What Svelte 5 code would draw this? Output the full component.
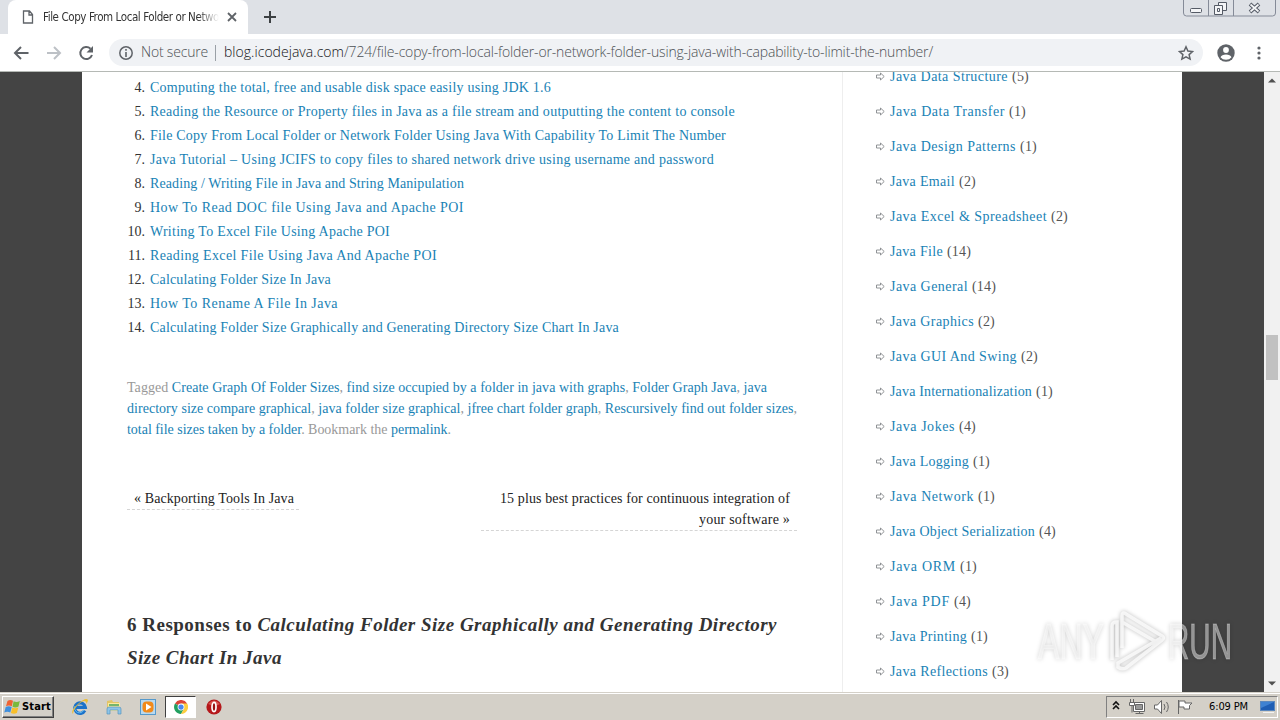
<script>
  const posts = [
    ['Computing the total, free and usable disk space easily using JDK 1.6', 401],
    ['Reading the Resource or Property files in Java as a file stream and outputting the content to console', 585],
    ['File Copy From Local Folder or Network Folder Using Java With Capability To Limit The Number', 576],
    ['Java Tutorial – Using JCIFS to copy files to shared network drive using username and password', 564],
    ['Reading / Writing File in Java and String Manipulation', 314],
    ['How To Read DOC file Using Java and Apache POI', 314],
    ['Writing To Excel File Using Apache POI', 240],
    ['Reading Excel File Using Java And Apache POI', 287],
    ['Calculating Folder Size In Java', 181],
    ['How To Rename A File In Java', 188],
    ['Calculating Folder Size Graphically and Generating Directory Size Chart In Java', 469]
  ];

  const categories = [
    ['Java Data Structure', 5, 118],
    ['Java Data Transfer', 1, 115],
    ['Java Design Patterns', 1, 126],
    ['Java Email', 2, 65],
    ['Java Excel & Spreadsheet', 2, 157],
    ['Java File', 14, 53],
    ['Java General', 14, 78],
    ['Java Graphics', 2, 84],
    ['Java GUI And Swing', 2, 127],
    ['Java Internationalization', 1, 142],
    ['Java Jokes', 4, 65],
    ['Java Logging', 1, 79],
    ['Java Network', 1, 84],
    ['Java Object Serialization', 4, 145],
    ['Java ORM', 1, 66],
    ['Java PDF', 4, 60],
    ['Java Printing', 1, 77],
    ['Java Reflections', 3, 98]
  ];

  // spreads a line of text over the given width
  function fit(node, width) {
    const natural = node.getBoundingClientRect().width;
    node.style.letterSpacing = (width - natural) / node.textContent.length + 'px';
  }
</script>

<div class="screen">
  <div class="tabstrip">
    <div class="edge"></div>
    <div class="tab">
      <svg width="12" height="14" viewBox="0 0 12 14"><path d="M1.500 1h6l3 3.500V13h-9zM7 1v4h3.500" fill="#fff" stroke="#5f6368" stroke-width="1.300" /></svg>
      <div class="title"><span use:fit={176}>File Copy From Local Folder or Netwo</span></div>
      <svg class="x" width="10" height="10" viewBox="0 0 10 10"><path d="M1 1l8 8M9 1l-8 8" stroke="#5f6368" stroke-width="1.800" /></svg>
    </div>
    <svg class="newtab" width="12" height="12" viewBox="0 0 12 12"><path d="M6 0v12M0 6h12" stroke="#3c4043" stroke-width="2" /></svg>
    <svg class="winbtns" width="94" height="18" viewBox="0 0 94 18">
      <path d="M.5 0v13q0 3 3 3h86q3 0 3-3V0M25.500 0v16M50.500 0v16" fill="none" stroke="#858b98" />
      <g fill="#f4f5f7" stroke="#555b66">
        <rect x="7.500" y="8.500" width="11" height="4" rx="1" />
        <path d="M35.500 2.500h8v8h-8z" /><path d="M31.500 5.500h8v9h-8zM34.500 8.500h2v3h-2z" />
      </g>
      <path d="M67 4l9 8M76 4l-9 8" stroke="#555b66" stroke-width="3.800" />
      <path d="M67.500 4.500l8 7M75.500 4.500l-8 7" stroke="#f4f5f7" stroke-width="1.700" />
    </svg>
  </div>

  <div class="toolbar">
    <svg class="nav" width="96" height="20" viewBox="0 0 96 20">
      <path d="M28.500 10H15.500M21 4l-6 6 6 6" fill="none" stroke="#5f6368" stroke-width="2" />
      <path d="M47 10h13M54 4l6 6-6 6" fill="none" stroke="#bdc1c6" stroke-width="2" />
      <path d="M90.500 5.700A6 6 0 1 0 92 12" fill="none" stroke="#5f6368" stroke-width="2" />
      <path d="M93 3v6.500h-6.500z" fill="#5f6368" />
    </svg>
    <div class="address">
      <svg width="14" height="14" viewBox="0 0 14 14"><circle cx="7" cy="7" r="6.200" fill="none" stroke="#5f6368" stroke-width="1.500" /><path d="M7 6v5M7 3v1.700" stroke="#5f6368" stroke-width="1.600" /></svg>
      <div class="secure"><span use:fit={67}>Not secure</span></div>
      <div class="divider"></div>
      <div class="url"><span class="host" use:fit={120}>blog.icodejava.com</span><span use:fit={589}>/724/file-copy-from-local-folder-or-network-folder-using-java-with-capability-to-limit-the-number/</span></div>
      <svg class="star" width="16" height="16" viewBox="0 0 16 16"><path d="M8 1.800l1.900 4.200 4.600.5-3.400 3.100 1 4.500L8 11.800l-4.100 2.300 1-4.500L1.500 6.500l4.600-.5z" fill="none" stroke="#5f6368" stroke-width="1.500" /></svg>
    </div>
    <svg class="user" width="18" height="18" viewBox="0 0 18 18"><circle cx="9" cy="9" r="8.700" fill="#5f6368" /><circle cx="9" cy="6" r="2.900" fill="#fff" /><path d="M3.500 13.200q1.300-2.700 5.500-2.700t5.500 2.700q-2 2.600-5.500 2.600t-5.500-2.600" fill="#fff" /></svg>
    <svg class="dots" width="4" height="14" viewBox="0 0 4 14" fill="#5f6368"><circle cx="2" cy="2" r="1.600" /><circle cx="2" cy="7" r="1.600" /><circle cx="2" cy="12" r="1.600" /></svg>
  </div>

  <div class="viewport">
    <div class="page">
      <main>
        <ol start="4">
          {#each posts as [title, width], i}
            <li><span class="num">{i + 4}.</span><a href="#post" use:fit={width}>{title}</a></li>
          {/each}
        </ol>

        <div class="tags">
          <div><span use:fit={640}>Tagged <a href="#t">Create Graph Of Folder Sizes</a>, <a href="#t">find size occupied by a folder in java with graphs</a>, <a href="#t">Folder Graph Java</a>, <a href="#t">java</a></span></div>
          <div><span use:fit={670}><a href="#t">directory size compare graphical</a>, <a href="#t">java folder size graphical</a>, <a href="#t">jfree chart folder graph</a>, <a href="#t">Rescursively find out folder sizes</a>,</span></div>
          <div><span use:fit={324}><a href="#t">total file sizes taken by a folder</a>. Bookmark the <a href="#t">permalink</a>.</span></div>
        </div>

        <div class="neighbours">
          <div class="prev"><span use:fit={160}>« Backporting Tools In Java</span></div>
          <div class="next">
            <div><span use:fit={290}>15 plus best practices for continuous integration of</span></div>
            <div><span use:fit={91}>your software »</span></div>
          </div>
        </div>

        <h3>
          <div><span use:fit={650}>6 Responses to <em>Calculating Folder Size Graphically and Generating Directory</em></span></div>
          <div><span use:fit={155}><em>Size Chart In Java</em></span></div>
        </h3>
      </main>

      <aside>
        {#each categories as [name, count, width]}
          <div class="cat">
            <svg width="9" height="9" viewBox="0 0 9 9"><path d="M.5 3h4V1L8.200 4.500 4.500 8V6h-4z" fill="#fff" stroke="#85888b" stroke-width=".9" /></svg>
            <a href="#cat" use:fit={width}>{name}</a>
            <span class="count" use:fit={count > 9 ? 24 : 17}>({count})</span>
          </div>
        {/each}
      </aside>
    </div>

    <div class="scrollbar">
      <svg width="8" height="5" viewBox="0 0 8 5"><path d="M0 4.500L4 .5l4 4z" fill="#505050" /></svg>
      <div class="thumb"></div>
      <svg width="8" height="5" viewBox="0 0 8 5"><path d="M0 .5l4 4 4-4z" fill="#505050" /></svg>
    </div>
  </div>

  <div class="taskbar">
    <div class="start">
      <svg width="17" height="16" viewBox="0 0 17 16">
        <path d="M3.500 2q2.500-2 5.500-.3L7.800 7.300q-3-1.500-5.800 0z" fill="#ef6232" /><path d="M9.600 2.200q3 1.500 6.200-.2L14.500 7.500q-3 1.800-6 .2z" fill="#79b93c" />
        <path d="M1.700 8q3-1.500 6 0l-1.400 5.500q-3-1.500-6 0z" fill="#3f8fdd" /><path d="M8.300 8.500q3 1.500 6 0l-1.400 5.500q-3 1.500-6 0z" fill="#f8bf2a" />
      </svg>
      <b use:fit={29}>Start</b>
    </div>
    <div class="quick">
      <svg width="18" height="18" viewBox="0 0 18 18">
        <path d="M13.800 12.500A5.300 5.300 0 1 1 14.300 9.300H5" fill="none" stroke="#1c72c9" stroke-width="3.200" />
        <path d="M12.800 12A4.800 4.800 0 0 1 4 8" fill="none" stroke="#63bdf0" stroke-width="1" />
        <path d="M2 16Q-1 13 7 6T17 2q0 2-2 4 1-3-2-3-3 .5-7 5t-4 8" fill="#edbd32" />
      </svg>
      <svg width="18" height="18" viewBox="0 0 18 18">
        <path d="M2 3l5-1 1 2h6v9H2z" fill="#e3c466" /><path d="M3 5h12v8H3z" fill="#fae99d" /><path d="M4 6h10v2H4z" fill="#75b56c" />
        <path d="M2 16v-5q0-2 2-2h10q2 0 2 2v5h-3v-4H5v4z" fill="#8dc4e8" stroke="#5795bd" stroke-width=".7" />
      </svg>
      <svg width="18" height="18" viewBox="0 0 18 18">
        <rect x="1.500" y="1.500" width="15" height="15" fill="#b9d9ef" stroke="#5599cb" /><rect x="3.500" y="3.500" width="11" height="11" rx="4" fill="#f28a1a" /><path d="M7 5.500v7L12.500 9z" fill="#fff" />
      </svg>
      <div class="pressed">
        <svg width="14" height="14" viewBox="0 0 16 16">
          <path d="M8 8L1.100 4A8 8 0 0 1 15 4z" fill="#dc4437" /><path d="M8 8L1.100 4A8 8 0 0 0 8 16l3.500-6z" fill="#22a060" />
          <path d="M8 4h7a8 8 0 0 1-7 12l3.500-6z" fill="#fccd3f" /><circle cx="8" cy="8" r="3.900" fill="#fff" /><circle cx="8" cy="8" r="3" fill="#4887ef" />
        </svg>
      </div>
      <svg width="18" height="18" viewBox="0 0 18 18"><circle cx="9" cy="9" r="7.600" fill="#b5181b" /><path d="M3 6q6-7 12 0-5 3-12 0" fill="#d8514d" /><ellipse cx="9" cy="9" rx="2" ry="4.600" fill="#991313" stroke="#fff" stroke-width="1.700" /></svg>
    </div>
    <div class="tray">
      <svg width="90" height="20" viewBox="0 0 90 20">
        <path d="M6 8l3-3 3 3M6 12l3-3 3 3" fill="none" stroke="#111" stroke-width="1.600" />
        <g fill="#fff" stroke="#666">
          <path d="M26.500 5.500h11v9h-11zM28.500 16.500h8M32.500 14.500v2" /><path d="M28.500 7.500h7v5h-7z" fill="#999" />
          <path d="M23.500 2v4M26.500 2v4M22.500 5.500h5v3h-5zM25 8.500v7" />
          <path d="M47.500 8h3l4-4.500v13l-4-4.500h-3z" /><path d="M57 7q2 3 0 6M59.500 5q3.500 5 0 10" fill="none" />
          <path d="M71.500 3v14M72 4h6v2h7l-2.500 2.500V12H77v-2h-5z" />
        </g>
      </svg>
      <span class="clock"><span use:fit={39}>6:09 PM</span></span>
      <svg width="16" height="14" viewBox="0 0 16 14"><rect x=".5" y="1.500" width="14" height="9" fill="#1f5eb4" stroke="#5c88bd" /><path d="M1 2h13L1 8z" fill="#3f82d2" /><path d="M3 12.500h11" stroke="#f2f2f2" /></svg>
    </div>
  </div>

  <svg class="watermark" width="200" height="74" viewBox="0 0 200 74">
    <g fill="#fff" fill-opacity=".45" stroke="#fff" stroke-opacity=".3">
      <text x="3" y="54" textLength="66" lengthAdjust="spacingAndGlyphs">ANY</text>
      <text x="133" y="54" textLength="64" lengthAdjust="spacingAndGlyphs">RUN</text>
    </g>
    <g fill="none" stroke="#fff" stroke-opacity=".75" stroke-width="3.500">
      <path d="M77 55V21q0-4 5-4v35M87 43V11q0-5 4-2l36 22q3 2 0 4L91 63q-4 2-8-1v-4l43-25M87 17l36 21" />
    </g>
  </svg>
</div>

<style>
  :global(body) {
    overflow: hidden;
  }

  .screen {
    position: relative;
    width: 1280px;
    height: 720px;
    display: flex;
    flex-direction: column;
    overflow: hidden;
    background: #fff;
    font-family: "Liberation Serif", serif;
    font-size: 14px;
    color: #333;
  }

  svg {
    display: block;
    flex: none;
  }

  span,
  a,
  b {
    white-space: pre;
  }

  a {
    color: #1982b5;
    text-decoration: none;
  }

  .tabstrip {
    height: 34px;
    display: flex;
    background: #dee1e6;
    font-family: "DejaVu Sans Condensed", "DejaVu Sans", sans-serif;
    font-size: 11px;
  }

  .edge {
    width: 8px;
    background: #dee1e6;
  }

  .tab {
    width: 240px;
    box-sizing: border-box;
    padding: 0 11px 0 14px;
    display: flex;
    align-items: center;
    background: #fff;
    border-radius: 8px 8px 0 0;
  }

  .title {
    width: 176px;
    margin-left: 9px;
    overflow: hidden;
    white-space: nowrap;
    font-size: 11.5px;
    mask-image: linear-gradient(to right, #000 155px, transparent 176px);
  }

  .x {
    margin-left: 8px;
  }

  .newtab {
    margin: 11px 0 0 16px;
  }

  .winbtns {
    margin-left: auto;
    margin-right: 3px;
  }

  .toolbar {
    height: 37px;
    display: flex;
    align-items: center;
    border-bottom: 1px solid #b5b9b5;
    background: #fff;
  }

  .address {
    width: 1094px;
    height: 27px;
    box-sizing: border-box;
    margin-left: 13px;
    padding: 0 9px 0 10px;
    border-radius: 14px;
    display: flex;
    align-items: center;
    background: #f0f2f5;
    font-family: "Open Sans", sans-serif;
    font-weight: 300;
    font-size: 14px;
    line-height: 18px;
    color: #4c5054;
  }

  .secure {
    width: 67px;
    margin: -1px 0 0 8px;
  }

  .divider {
    width: 1px;
    height: 16px;
    margin: 0 8px 0 7px;
    background: #9aa0a6;
  }

  .url {
    display: flex;
    margin-top: -1px;
  }

  .host {
    color: #101114;
  }

  .star {
    margin-left: auto;
  }

  .user {
    margin-left: 14px;
  }

  .dots {
    margin-left: 22px;
  }

  .viewport {
    height: 620px;
    display: flex;
    background: #444;
    overflow: hidden;
  }

  .page {
    width: 1100px;
    margin: 0 82px;
    display: flex;
    background: #fff;
    overflow: hidden;
  }

  main {
    width: 761px;
    box-sizing: border-box;
    padding: 4px 45px 0;
    border-right: 1px solid #eee;
  }

  ol {
    margin: 0 0 37px;
    padding: 0;
    list-style: none;
  }

  li {
    display: flex;
    line-height: 24px;
  }

  .num {
    width: 18px;
    margin-right: 5px;
    text-align: right;
  }

  .tags {
    line-height: 21px;
    color: #999;
  }

  .neighbours {
    margin-top: 48px;
    display: flex;
    justify-content: space-between;
    align-items: flex-start;
    line-height: 21px;
    color: #222;
  }

  .prev {
    width: 172px;
    box-sizing: border-box;
    padding-left: 7px;
    border-bottom: 1px dashed #d5d5d5;
  }

  .next {
    width: 316px;
    box-sizing: border-box;
    padding-right: 7px;
    border-bottom: 1px dashed #d5d5d5;
    text-align: right;
  }

  h3 {
    margin: 77px 0 0;
    line-height: 33px;
    font-size: 19px;
    color: #333;
  }

  aside {
    margin-top: -13px;
    padding-left: 33px;
  }

  .cat {
    height: 35px;
    display: flex;
    align-items: center;
  }

  .cat a {
    margin-left: 5px;
  }

  .count {
    margin-left: 4px;
    color: #555;
  }

  .scrollbar {
    width: 16px;
    box-sizing: border-box;
    padding: 6px 2px;
    display: flex;
    flex-direction: column;
    align-items: center;
    justify-content: space-between;
    background: #f1f1f1;
  }

  .thumb {
    width: 12px;
    height: 45px;
    margin-bottom: 50px;
    background: #c1c1c1;
  }

  .taskbar {
    height: 28px;
    box-sizing: border-box;
    border-top: 1px solid #d4d0c8;
    box-shadow: inset 0 1px #fff;
    display: flex;
    align-items: center;
    background: #d4d0c8;
    font-family: "DejaVu Sans Condensed", "DejaVu Sans", sans-serif;
    font-size: 11px;
    color: #000;
  }

  .start {
    width: 52px;
    height: 22px;
    box-sizing: border-box;
    margin-left: 2px;
    padding-left: 1px;
    display: flex;
    align-items: center;
    border: 1px solid;
    border-color: #fff #404040 #404040 #fff;
    box-shadow: inset -1px -1px #808080;
  }

  .start b {
    margin-left: 1px;
  }

  .quick {
    margin-left: 17px;
    display: flex;
    align-items: center;
    gap: 16px;
  }

  .pressed {
    width: 31px;
    height: 22px;
    box-sizing: border-box;
    margin: 0 -7px 0 -8px;
    display: flex;
    align-items: center;
    justify-content: center;
    border: 1px solid;
    border-color: #404040 #fff #fff #404040;
    background: #fff;
  }

  .tray {
    width: 172px;
    height: 22px;
    box-sizing: border-box;
    margin: 0 2px 0 auto;
    display: flex;
    align-items: center;
    border: 1px solid;
    border-color: #808080 #fff #fff #808080;
  }

  .clock {
    width: 39px;
    margin: 0 12px;
  }

  /* logo laid over the page and its right margin */
  .watermark {
    position: absolute;
    left: 1035px;
    top: 605px;
    filter: drop-shadow(0 0 2px rgba(0, 0, 0, 0.35));
  }

  .watermark text {
    font-family: "Liberation Sans", sans-serif;
    font-size: 50px;
  }
</style>
